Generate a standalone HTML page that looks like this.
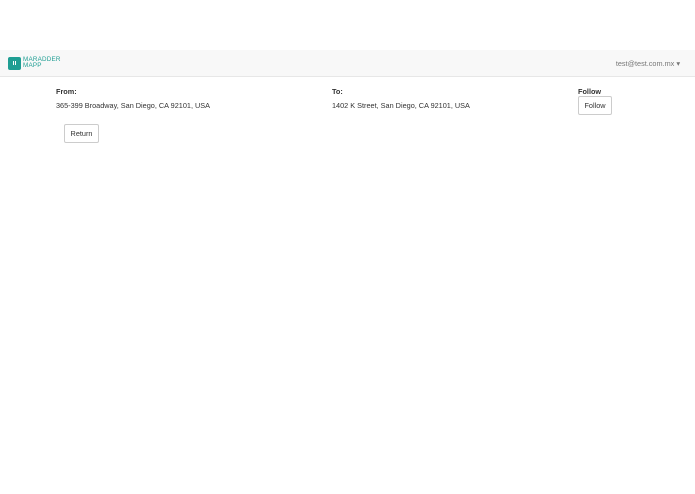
<!DOCTYPE html>
<html><head><style>
body{margin:0;width:695px;height:494px;background:#fff;font-family:"Liberation Sans",sans-serif;font-size:7.3px;color:#333;position:relative;overflow:hidden}
.nav{position:absolute;left:0;top:50px;width:695px;height:26px;background:#f8f8f8;border-bottom:1px solid #e7e7e7}
.logo{position:absolute;left:8px;top:7px;width:13px;height:13px;background:#1f9e93;border-radius:2px}
.logo:after{content:"";position:absolute;left:5px;top:4px;width:3px;height:4px;border-left:1px solid #fff;border-right:1px solid #fff;box-sizing:border-box}
.lt{position:absolute;left:23px;top:7px;color:#1f9e93;font-size:6.3px;line-height:6px;letter-spacing:.2px}
.user{position:absolute;right:15px;top:9px;color:#777}
.a{position:absolute}
b{font-weight:bold}
.btn{position:absolute;border:1px solid #ccc;border-radius:2px;background:#fff;text-align:center;line-height:17px;height:17px}
</style></head><body>
<div class="nav"><div class="logo"></div><div class="lt">MARADDER<br>MAPP</div><div class="user">test@test.com.mx ▾</div></div>
<div class="a" style="left:56px;top:87px"><b>From:</b></div>
<div class="a" style="left:56px;top:101px">365-399 Broadway, San Diego, CA 92101, USA</div>
<div class="a" style="left:332px;top:87px"><b>To:</b></div>
<div class="a" style="left:332px;top:101px">1402 K Street, San Diego, CA 92101, USA</div>
<div class="a" style="left:578px;top:87px"><b>Follow</b></div>
<div class="btn" style="left:578px;top:96px;width:32px">Follow</div>
<div class="btn" style="left:64px;top:124px;width:33px">Return</div>
</body></html>
